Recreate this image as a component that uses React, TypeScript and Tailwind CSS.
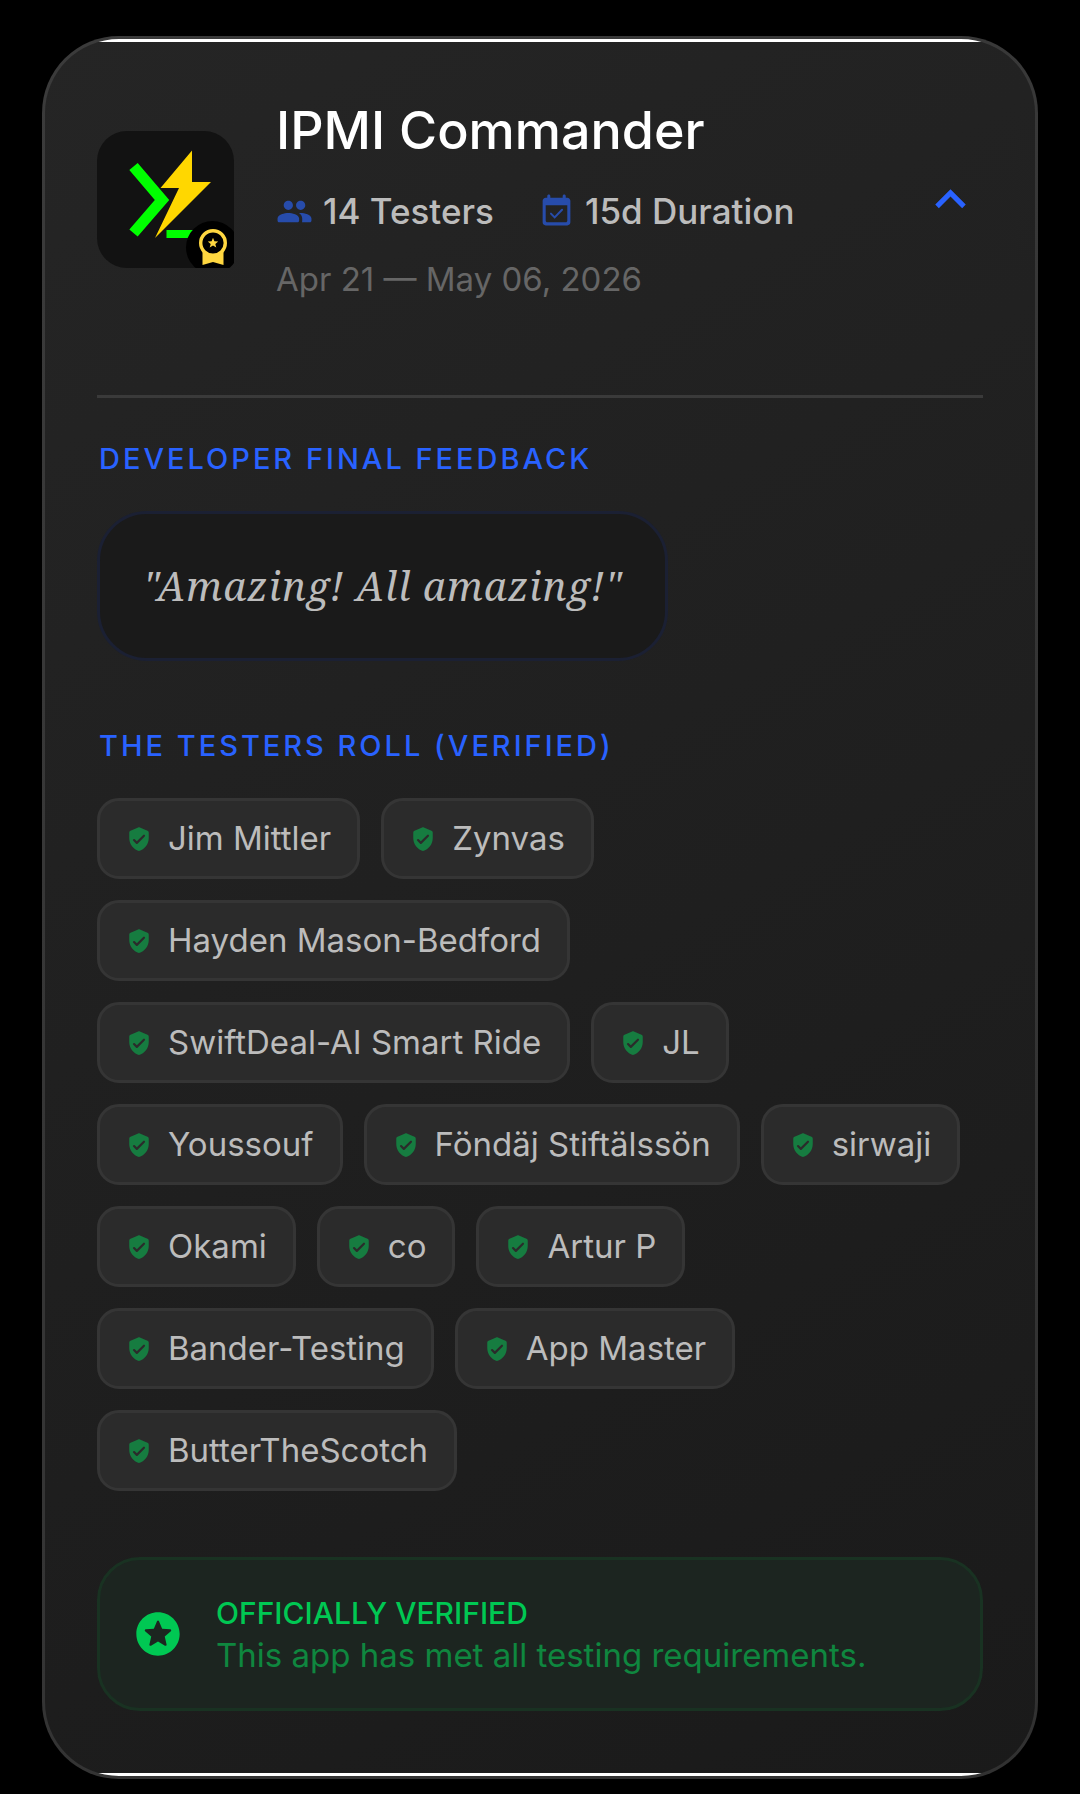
import type { ReactNode } from 'react'
import { MdKeyboardArrowUp } from 'react-icons/md'

const testers = [
  'Jim Mittler',
  'Zynvas',
  'Hayden Mason-Bedford',
  'SwiftDeal-AI Smart Ride',
  'JL',
  'Youssouf',
  'Föndäj Stiftälssön',
  'sirwaji',
  'Okami',
  'co',
  'Artur P',
  'Bander-Testing',
  'App Master',
  'ButterTheScotch',
]

function AppLogo() {
  return (
    <div className="relative h-[137px] w-[137px] shrink-0 overflow-hidden">
      <svg viewBox="0 0 137 137" className="h-full w-full rounded-[30px] bg-[#121212]">
        <path d="M36.5 35.5 65 69 36.5 102" fill="none" stroke="#00ff00" strokeWidth="11" />
        <path d="M95 19.5V51H114L58 107 82 57H63.5Z" fill="#ffd700" />
        <path d="M69.5 99H101v8H69.5z" fill="#00ff00" />
      </svg>
      <div className="absolute top-[90px] left-[89px] flex h-[53px] w-[53px] items-center justify-center rounded-full bg-black">
        <svg viewBox="0 0 28 36" className="h-9 w-7">
          <path d="M3.5 20h21v16L14 33 3.5 36z" fill="#ffd740" />
          <circle cx="14" cy="14" r="12.3" fill="#000" stroke="#ffd740" strokeWidth="3.4" />
          <path d="m14 8.8 1.4 3.5 3.8.2-2.9 2.4 1 3.7-3.3-2.1-3.3 2.1 1-3.7-2.9-2.4 3.8-.2z" fill="#ffd740" />
        </svg>
      </div>
    </div>
  )
}

function PeopleIcon() {
  return (
    <svg viewBox="0 0 24 24" className="h-[37px] w-[37px] shrink-0" fill="#274cab">
      <path d="M16 11c1.66 0 2.99-1.34 2.99-3S17.66 5 16 5s-3 1.34-3 3 1.34 3 3 3zm-8 0c1.66 0 2.99-1.34 2.99-3S9.66 5 8 5 5 6.34 5 8s1.34 3 3 3zm0 2c-2.33 0-7 1.17-7 3.5V18c0 .55.45 1 1 1h12c.55 0 1-.45 1-1v-1.5c0-2.33-4.67-3.5-7-3.5zm8 0c-.29 0-.62.02-.97.05.02.01.03.03.04.04 1.14.83 1.93 1.94 1.93 3.41V18c0 .35-.07.69-.18 1H22c.55 0 1-.45 1-1v-1.5c0-2.33-4.67-3.5-7-3.5z" />
    </svg>
  )
}

function CalendarIcon() {
  return (
    <svg viewBox="0 0 24 24" className="h-[37px] w-[37px] shrink-0" fill="#274cab">
      <path d="M19 3h-1V2c0-.55-.45-1-1-1s-1 .45-1 1v1H8V2c0-.55-.45-1-1-1s-1 .45-1 1v1H5c-1.11 0-1.99.9-1.99 2L3 19c0 1.1.89 2 2 2h14c1.1 0 2-.9 2-2V5c0-1.1-.9-2-2-2zm-1 16H6c-.55 0-1-.45-1-1V8h14v10c0 .55-.45 1-1 1z" />
      <path d="m8.4 13.4 2.4 2.4 4.8-4.9" fill="none" stroke="#274cab" strokeWidth="1.3" strokeLinecap="round" />
    </svg>
  )
}

function ShieldIcon() {
  return (
    <svg viewBox="0 0 24 24" className="h-[26px] w-[26px] shrink-0" fill="#167c40">
      <path d="m11.19 1.36-7 3.11C3.47 4.79 3 5.51 3 6.3V11c0 5.55 3.84 10.74 9 12 5.16-1.26 9-6.45 9-12V6.3c0-.79-.47-1.51-1.19-1.83l-7-3.11c-.51-.23-1.11-.23-1.62 0zM9.29 16.29 6.7 13.7a.996.996 0 1 1 1.41-1.41L10 14.17l5.88-5.88a.996.996 0 1 1 1.41 1.41l-6.59 6.59c-.38.39-1.02.39-1.41 0z" />
    </svg>
  )
}

function StarsIcon() {
  return (
    <svg viewBox="0 0 24 24" className="h-[52px] w-[52px] shrink-0" fill="#00c853">
      <path d="M11.99 2C6.47 2 2 6.48 2 12s4.47 10 9.99 10C17.52 22 22 17.52 22 12S17.52 2 11.99 2zm3.23 15.39L12 15.45l-3.22 1.94c-.38.23-.85-.11-.75-.54l.85-3.66-2.83-2.45c-.33-.29-.15-.84.29-.88l3.74-.32 1.46-3.45c.17-.41.75-.41.92 0l1.46 3.44 3.74.32c.44.04.62.59.28.88l-2.83 2.45.85 3.67c.1.43-.36.77-.74.54z" />
    </svg>
  )
}

function SectionTitle({ children }: { children: ReactNode }) {
  return <h3 className="text-[29px] leading-9 font-medium tracking-[3px] text-[#2962ff]">{children}</h3>
}

export default function App() {
  return (
    <div className="min-h-screen bg-black px-[42px] pt-9 pb-[14px] font-['Inter',sans-serif]">
      <article className="overflow-hidden rounded-[77px] border-3 border-white/10 bg-linear-150 from-[#252525] to-[#1a1a1a] bg-origin-border">
        <div className="border-y-3 border-white px-[52px] pt-[61px] pb-[62px]">
          <header className="flex items-center border-b-3 border-[#3a3a3a] pb-[100px]">
            <AppLogo />
            <div className="ml-[42px] flex-1">
              <h2 className="text-[52px] leading-14 font-medium text-white">IPMI Commander</h2>
              <div className="mt-8 flex flex-wrap items-center gap-x-11 text-[35px] leading-10 font-medium text-[#bcbcbc]">
                <span className="flex items-center gap-[10px]">
                  <PeopleIcon />
                  14 Testers
                </span>
                <span className="flex items-center gap-[10px]">
                  <CalendarIcon />
                  15d Duration
                </span>
              </div>
              <p className="mt-8 text-[33px] leading-8 text-[#666]">Apr 21 — May 06, 2026</p>
            </div>
            <button type="button" aria-label="Collapse" className="mr-0.5 shrink-0">
              <MdKeyboardArrowUp className="h-[61px] w-[61px] text-[#2962ff]" />
            </button>
          </header>

          <section className="mt-[43px]">
            <div className="pl-0.5">
              <SectionTitle>DEVELOPER FINAL FEEDBACK</SectionTitle>
            </div>
            <blockquote className="mt-[34px] w-fit rounded-[50px] border-3 border-[#1b2033] bg-[#1a1a1a] px-[43px] py-[47px] font-['Noto_Serif',serif] text-[40px] leading-[50px] tracking-[1px] text-[#bcbcbc] italic">
              "Amazing! All amazing!"
            </blockquote>
          </section>

          <section className="mt-[67px]">
            <div className="pl-0.5">
              <SectionTitle>THE TESTERS ROLL (VERIFIED)</SectionTitle>
            </div>
            <ul className="mt-[34px] flex flex-wrap gap-[21px]">
              {testers.map((name) => (
                <li
                  key={name}
                  className="flex items-center gap-4 rounded-[22px] border-3 border-[#353535] bg-[#2b2b2b] px-[26px] py-5 text-[33px] leading-[35px] text-[#bcbcbc]"
                >
                  <ShieldIcon />
                  {name}
                </li>
              ))}
            </ul>
          </section>

          <footer className="mt-[66px] flex items-center gap-8 rounded-[43px] border-3 border-[#193222] bg-[#1c2520] p-8">
            <StarsIcon />
            <div>
              <p className="text-[30px] leading-[42px] font-medium text-[#00c853]">OFFICIALLY VERIFIED</p>
              <p className="text-[33px] leading-[42px] text-[#0f873f]">This app has met all testing requirements.</p>
            </div>
          </footer>
        </div>
      </article>
    </div>
  )
}
